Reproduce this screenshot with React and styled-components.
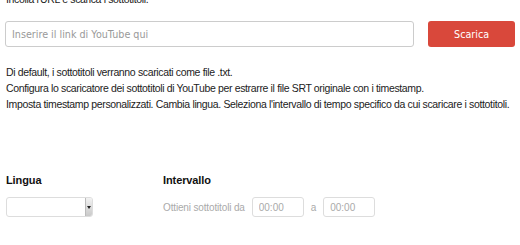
import React from "react";
import styled, { createGlobalStyle } from "styled-components";

const GlobalStyle = createGlobalStyle`
  html, body {
    margin: 0;
    padding: 0;
    background: #fff;
  }
  body {
    font-family: "Liberation Sans", Arial, sans-serif;
    color: #222;
    overflow: hidden;
  }
`;

const Page = styled.div`
  width: 520px;
  height: 245px;
  padding: 0 5px 0 5px;
  box-sizing: border-box;
  overflow: hidden;
`;

const Intro = styled.p`
  margin: -8px 0 0 1px;
  font-size: 10.5px;
  letter-spacing: -0.35px;
  line-height: 14px;
`;

const SearchRow = styled.div`
  display: flex;
  align-items: center;
  gap: 14px;
  margin-top: 15px;
`;

const UrlInput = styled.input`
  width: 410px;
  height: 26px;
  box-sizing: border-box;
  border: 1px solid #ccc;
  border-radius: 3px;
  padding: 0 6px;
  font-family: "DejaVu Sans", Verdana, sans-serif;
  font-size: 9.6px;
  color: #333;
  outline: none;

  &::placeholder {
    color: #999;
  }
`;

const Button = styled.button`
  width: 87px;
  height: 26px;
  border: none;
  border-radius: 3px;
  background: #d9483b;
  color: #fff;
  font-family: "DejaVu Sans", Verdana, sans-serif;
  font-size: 9.6px;
  cursor: pointer;
`;

const Notes = styled.div`
  margin: 17px 0 0 1px;
  font-size: 10.5px;
  letter-spacing: -0.35px;
  line-height: 16px;
  color: #222;
`;

const Options = styled.div`
  display: flex;
  margin: 61px 0 0 1px;
`;

const Column = styled.div`
  width: ${(p) => p.$width || "auto"};
  display: flex;
  flex-direction: column;
  gap: 9px;
`;

const Heading = styled.div`
  font-size: 11px;
  font-weight: bold;
  letter-spacing: -0.1px;
  color: #111;
  line-height: 15px;
`;

const Select = styled.div`
  position: relative;
  width: 87px;
  height: 20px;
  box-sizing: border-box;
  border: 1px solid #ddd;
  border-radius: 3px;
  background: #fff;
`;

const SelectArrow = styled.div`
  position: absolute;
  top: 0;
  right: 0;
  bottom: 0;
  width: 6px;
  background: linear-gradient(#f2f2f2, #c9c9c9);
  border-left: 1px solid #bbb;
  border-radius: 0 2px 2px 0;

  &::after {
    content: "";
    position: absolute;
    left: 1px;
    top: 8px;
    border-left: 2px solid transparent;
    border-right: 2px solid transparent;
    border-top: 3px solid #222;
  }
`;

const RangeRow = styled.div`
  display: flex;
  align-items: center;
  font-size: 10px;
  letter-spacing: -0.15px;
  color: #aaa;
`;

const Joiner = styled.span`
  margin: 0 ${(p) => p.$right || "7px"} 0 ${(p) => p.$left || "7px"};
`;

const TimeInput = styled.input`
  width: 52px;
  height: 20px;
  box-sizing: border-box;
  border: 1px solid #ddd;
  border-radius: 3px;
  padding: 0 6px;
  font-family: "Liberation Sans", Arial, sans-serif;
  font-size: 10px;
  color: #333;
  outline: none;

  &::placeholder {
    color: #aaa;
  }
`;

export default function App() {
  return (
    <>
      <GlobalStyle />
      <Page>
        <Intro>Incolla l'URL e scarica i sottotitoli.</Intro>
        <SearchRow>
          <UrlInput placeholder="Inserire il link di YouTube qui" />
          <Button>Scarica</Button>
        </SearchRow>
        <Notes>
          <div>Di default, i sottotitoli verranno scaricati come file .txt.</div>
          <div>
            Configura lo scaricatore dei sottotitoli di YouTube per estrarre il
            file SRT originale con i timestamp.
          </div>
          <div>
            Imposta timestamp personalizzati. Cambia lingua. Seleziona
            l'intervallo di tempo specifico da cui scaricare i sottotitoli.
          </div>
        </Notes>
        <Options>
          <Column $width="157px">
            <Heading>Lingua</Heading>
            <Select>
              <SelectArrow />
            </Select>
          </Column>
          <Column>
            <Heading>Intervallo</Heading>
            <RangeRow>
              Ottieni sottotitoli da
              <Joiner $left="0px" />
              <TimeInput placeholder="00:00" />
              <Joiner>a</Joiner>
              <TimeInput placeholder="00:00" />
            </RangeRow>
          </Column>
        </Options>
      </Page>
    </>
  );
}
